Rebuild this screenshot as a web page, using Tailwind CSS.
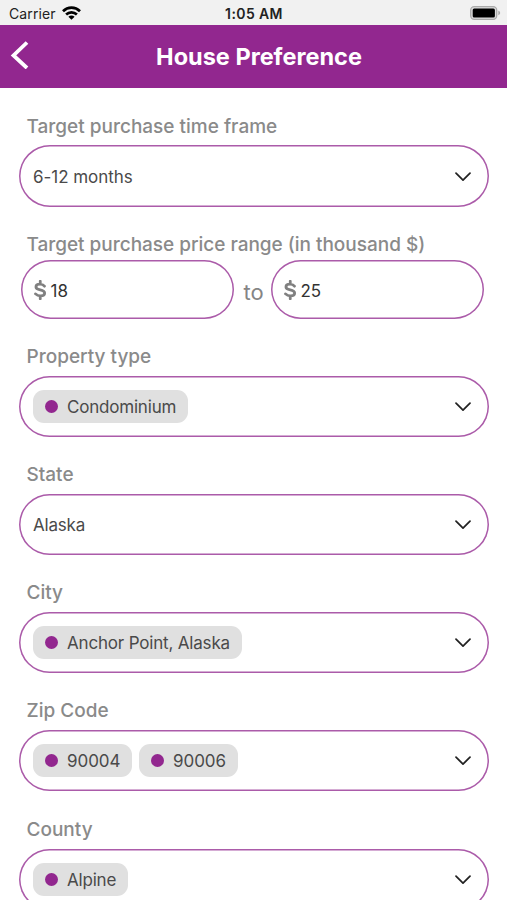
<!DOCTYPE html>
<html lang="en">
<head>
<meta charset="utf-8">
<title>House Preference</title>
<script src="https://cdn.jsdelivr.net/npm/@tailwindcss/browser@4"></script>
</head>
<body class="h-[900px] w-[507px] overflow-hidden bg-white font-[Inter,sans-serif] text-[#4a4a4a]">
<svg class="hidden">
  <symbol id="chevron" viewBox="0 0 16 10"><path d="M1 1.2L8 8.2L15 1.2" fill="none" stroke="#222" stroke-width="1.7" stroke-linecap="round" stroke-linejoin="round"/></symbol>
  <symbol id="dollar" viewBox="0 0 12 20"><path d="M6 1.2V4M6 16V18.8M10.2 6.2C9.2 5 7.8 4.2 5.8 4.2C3.4 4.2 1.7 5.2 1.7 7C1.7 11.2 10.4 8.6 10.4 13C10.4 15 8.5 15.9 6.2 15.9C4.2 15.9 2.5 15.2 1.3 13.9" fill="none" stroke="#808080" stroke-width="2.8" stroke-linecap="round"/></symbol>
</svg>
<header>
  <div class="grid h-[25px] grid-cols-3 items-center bg-[#f1f1f1] pr-[6px] pl-[9px] pt-[2px] text-[#222]">
    <div class="flex items-center gap-[6px]">
      <span class="text-[14px] tracking-[0.12px]">Carrier</span>
      <svg class="mb-[2px] h-[14px] w-[19px]" viewBox="0 0 19 14" fill="none" stroke="#000" stroke-width="2.7"><path d="M1 5.2C5.8.5 13.2.5 18 5.2M4.1 8.5C7.2 5.6 11.8 5.6 14.9 8.5"/><path d="M6.4 10.8C8.2 9.2 10.8 9.2 12.6 10.8L9.5 13.8Z" fill="#000" stroke="none"/></svg>
    </div>
    <span class="pr-[2px] text-center text-[14px] font-semibold tracking-[0.4px] whitespace-nowrap">1:05 AM</span>
    <svg class="mb-[1px] h-[14px] w-[31px] justify-self-end" viewBox="0 0 31 14"><rect x=".7" y=".7" width="26" height="12.6" rx="3.5" fill="#ddd" stroke="#aaa" stroke-width="1.3"/><rect x="2.7" y="2.5" width="22.2" height="9" rx="1.5" fill="#000"/><path d="M28.3 4.8C30.7 5.4 30.7 8.6 28.3 9.2Z" fill="#aaa"/></svg>
  </div>
  <div class="grid h-[63px] grid-cols-[50px_1fr_50px] items-center bg-[#92278f]">
    <svg class="mb-[4px] ml-[10px] h-[28px] w-[19px]" viewBox="0 0 19 28"><path d="M17 1.5L3.5 14.5L17 27" fill="none" stroke="#fff" stroke-width="3.8"/></svg>
    <h1 class="pt-[1px] pl-[11px] text-center text-[23.5px] font-bold tracking-[0] whitespace-nowrap text-white">House Preference</h1>
  </div>
</header>
<main class="px-[19px] pt-[27px] text-[17px]">
  <section class="h-[118px]">
    <h2 class="flex h-[30.4px] items-start pl-[7.5px] text-[19px] leading-[23px] font-medium text-[#8a8a8a]">Target purchase time frame</h2>
    <div class="flex h-[62px] w-[470px] items-center justify-between rounded-full shadow-[inset_0_0_0_1.5px_#ab5ba9] pr-[18px] pl-[14px]"><span class="pt-[2px] tracking-[-0.05px]">6-12 months</span><svg class="mt-px h-[10px] w-[16px]"><use href="#chevron"/></svg></div>
  </section>
  <section class="h-[112px]">
    <h2 class="flex h-[27px] items-start pl-[7.5px] text-[19px] leading-[23px] font-medium tracking-[-0.02px] text-[#8a8a8a]">Target purchase price range (in thousand $)</h2>
    <div class="flex items-center pl-[2px]">
      <div class="flex h-[59px] w-[213px] items-center gap-[4px] rounded-full shadow-[inset_0_0_0_1.5px_#ab5ba9] px-[13px] text-[#333]"><svg class="mt-px h-[20px] w-[12.5px]"><use href="#dollar"/></svg><span class="pt-[4px]">18</span></div>
      <span class="w-[37px] pt-[5px] pl-[2px] text-center text-[22px] leading-[26px] text-[#858585]">to</span>
      <div class="flex h-[59px] w-[213px] items-center gap-[4px] rounded-full shadow-[inset_0_0_0_1.5px_#ab5ba9] px-[13px] text-[#333]"><svg class="mt-px h-[20px] w-[12.5px]"><use href="#dollar"/></svg><span class="pt-[4px]">25</span></div>
    </div>
  </section>
  <section class="h-[118px]">
    <h2 class="flex h-[31px] items-start pl-[7.5px] text-[19px] leading-[23px] font-medium text-[#8a8a8a]">Property type</h2>
    <div class="flex h-[61px] w-[470px] items-center justify-between rounded-full shadow-[inset_0_0_0_1.5px_#ab5ba9] pr-[18px] pl-[14px]">
      <div class="flex h-[33px] w-[155px] items-center gap-[9px] rounded-[11px] bg-[#e0e0e0] pl-[12px]"><i class="size-[13px] shrink-0 rounded-full bg-[#92278f]"></i><span class="pt-[2px] tracking-[-0.2px]">Condominium</span></div><svg class="mt-px h-[10px] w-[16px]"><use href="#chevron"/></svg></div>
  </section>
  <section class="h-[118px]">
    <h2 class="flex h-[31px] items-start pl-[7.5px] text-[19px] leading-[23px] font-medium text-[#8a8a8a]">State</h2>
    <div class="flex h-[61px] w-[470px] items-center justify-between rounded-full shadow-[inset_0_0_0_1.5px_#ab5ba9] pr-[18px] pl-[14px]"><span class="pt-[2px] tracking-[-0.2px]">Alaska</span><svg class="mt-px h-[10px] w-[16px]"><use href="#chevron"/></svg></div>
  </section>
  <section class="h-[118px]">
    <h2 class="flex h-[31px] items-start pl-[7.5px] text-[19px] leading-[23px] font-medium text-[#8a8a8a]">City</h2>
    <div class="flex h-[61px] w-[470px] items-center justify-between rounded-full shadow-[inset_0_0_0_1.5px_#ab5ba9] pr-[18px] pl-[14px]">
      <div class="flex h-[33px] w-[209px] items-center gap-[9px] rounded-[11px] bg-[#e0e0e0] pl-[12px]"><i class="size-[13px] shrink-0 rounded-full bg-[#92278f]"></i><span class="pt-[2px] tracking-[-0.18px] whitespace-nowrap">Anchor Point, Alaska</span></div><svg class="mt-px h-[10px] w-[16px]"><use href="#chevron"/></svg></div>
  </section>
  <section class="h-[119px]">
    <h2 class="flex h-[31px] items-start pl-[7.5px] text-[19px] leading-[23px] font-medium text-[#8a8a8a]">Zip Code</h2>
    <div class="flex h-[61px] w-[470px] items-center justify-between rounded-full shadow-[inset_0_0_0_1.5px_#ab5ba9] pr-[18px] pl-[14px]">
      <div class="flex gap-[7px]">
        <div class="flex h-[33px] w-[99px] items-center gap-[9px] rounded-[11px] bg-[#e0e0e0] pl-[12px]"><i class="size-[13px] shrink-0 rounded-full bg-[#92278f]"></i><span class="pt-[2px] tracking-[-0.05px]">90004</span></div>
        <div class="flex h-[33px] w-[99px] items-center gap-[9px] rounded-[11px] bg-[#e0e0e0] pl-[12px]"><i class="size-[13px] shrink-0 rounded-full bg-[#92278f]"></i><span class="pt-[2px] tracking-[-0.05px]">90006</span></div>
      </div><svg class="mt-px h-[10px] w-[16px]"><use href="#chevron"/></svg></div>
  </section>
  <section class="h-[118px]">
    <h2 class="flex h-[31px] items-start pl-[7.5px] text-[19px] leading-[23px] font-medium text-[#8a8a8a]">County</h2>
    <div class="flex h-[61px] w-[470px] items-center justify-between rounded-full shadow-[inset_0_0_0_1.5px_#ab5ba9] pr-[18px] pl-[14px]">
      <div class="flex h-[33px] w-[95px] items-center gap-[9px] rounded-[11px] bg-[#e0e0e0] pl-[12px]"><i class="size-[13px] shrink-0 rounded-full bg-[#92278f]"></i><span class="pt-[2px] tracking-[-0.2px]">Alpine</span></div><svg class="mt-px h-[10px] w-[16px]"><use href="#chevron"/></svg></div>
  </section>
</main>
</body>
</html>
